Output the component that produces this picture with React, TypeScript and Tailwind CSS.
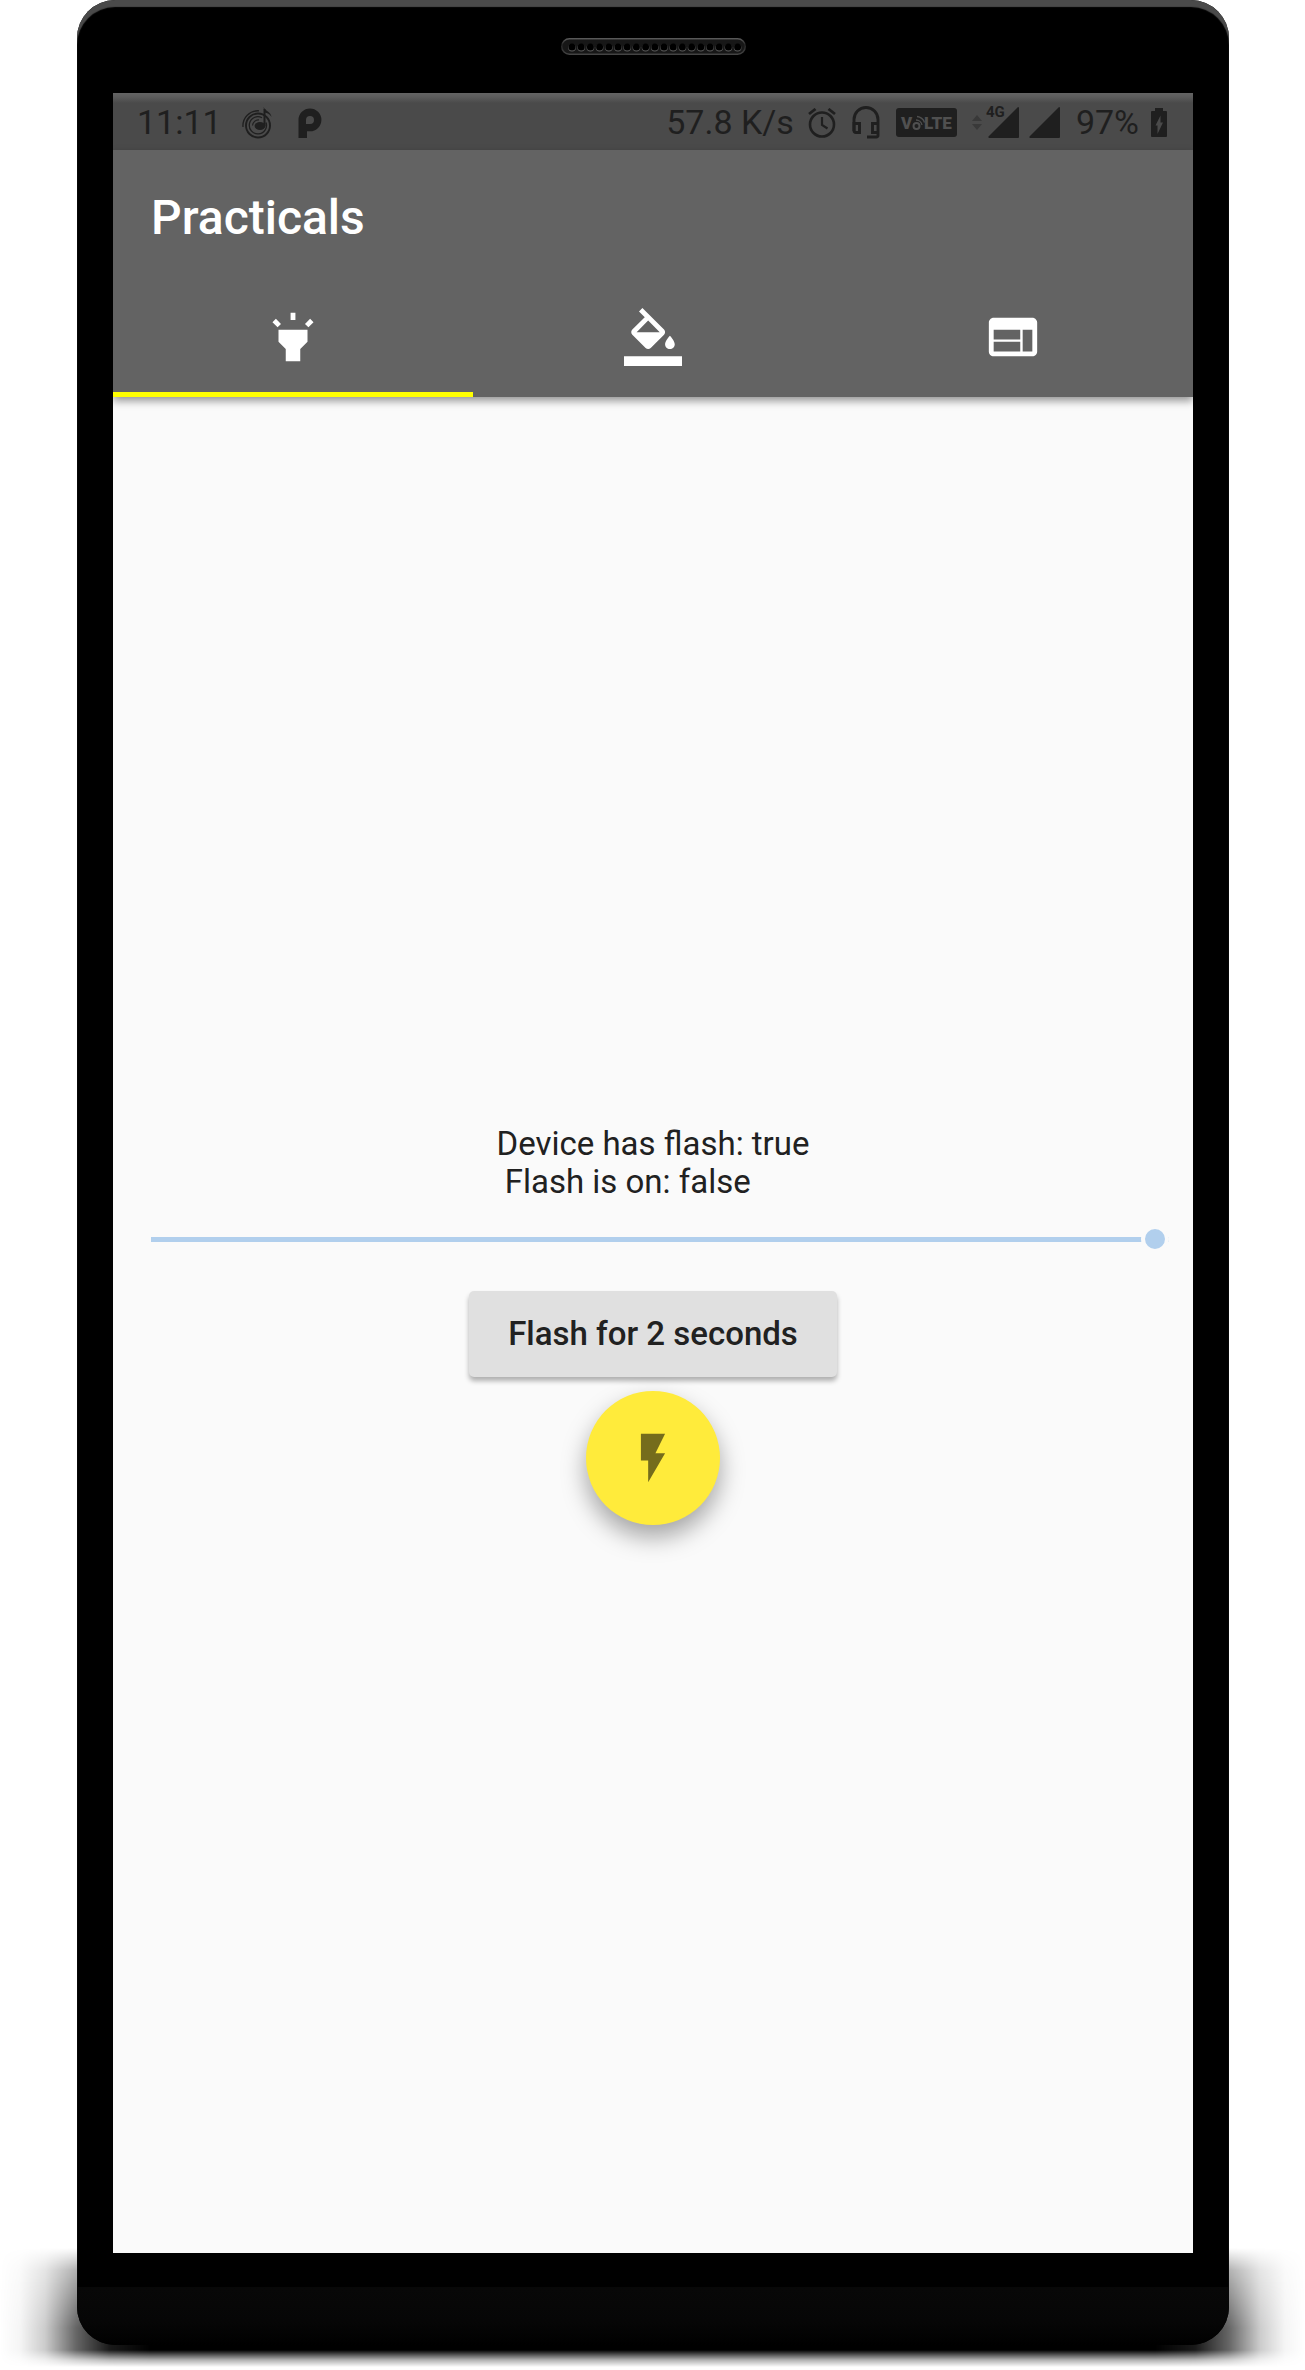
import React, { useState } from "react";

const HOLES = Array.from({ length: 19 }, (_, i) => 11 + i * 9.2);

function Speaker() {
  return (
    <svg width="185" height="17" viewBox="0 0 185 17" aria-hidden="true">
      <defs>
        <linearGradient id="rim" x1="0" y1="0" x2="0" y2="1">
          <stop offset="0" stopColor="#585858" />
          <stop offset="0.4" stopColor="#242424" />
          <stop offset="1" stopColor="#444" />
        </linearGradient>
      </defs>
      <rect x="0.75" y="0.75" width="183.5" height="15.5" rx="7.75" fill="#171717" stroke="url(#rim)" strokeWidth="1.5" />
      {HOLES.map((x) => (
        <g key={x}>
          <circle cx={x} cy="9.8" r="3.8" fill="#5c5c5c" />
          <circle cx={x} cy="9" r="3.5" fill="#000" />
        </g>
      ))}
    </svg>
  );
}

function MusicIcon() {
  return (
    <svg width="30" height="32" viewBox="0 0 30 32" fill="none" stroke="currentColor" aria-hidden="true">
      <circle cx="16" cy="18.500" r="12" strokeWidth="1.900" />
      <path d="M20 10.800A8.600 8.600 0 1 0 24 15.500" strokeWidth="1.300" />
      <path d="M17 13A6 6 0 0 0 10.500 18.500" strokeWidth="1.200" />
      <path d="M1 20A15 15 0 0 1 17 3.800" strokeWidth="1.300" />
      <path d="M22.500 19V2" strokeWidth="2" />
      <path d="M21.500 0c1.500 4 7.500 4.500 8 10-2-3-4-4-7-4.500z" fill="currentColor" stroke="none" />
      <ellipse cx="18" cy="19" rx="5.400" ry="4" fill="currentColor" stroke="none" />
    </svg>
  );
}

function ParkingLogo() {
  return (
    <svg width="24" height="30" viewBox="0 0 24 30" aria-hidden="true">
      <path
        d="M12 0.500a11.400 11.400 0 0 1 0 22.800H9V30H0.500V12A11.500 11.500 0 0 1 12 0.500z M12 8a4 4 0 0 0-4 4v4h4a4 4 0 0 0 0-8z"
        fill="currentColor"
        fillRule="evenodd"
      />
    </svg>
  );
}

function AlarmIcon() {
  return (
    <svg width="28" height="30" viewBox="0 0 28 30" fill="none" stroke="currentColor" aria-hidden="true">
      <circle cx="14" cy="16.500" r="12" strokeWidth="2.600" />
      <path d="M14 9v8l5.500 3.500" strokeWidth="2.200" />
      <path d="M1 6l6.500-5M27 6l-6.500-5" strokeWidth="2.800" />
    </svg>
  );
}

function HeadsetIcon() {
  return (
    <svg width="28" height="33" viewBox="0 0 28 33" fill="none" stroke="currentColor" strokeWidth="2.900" aria-hidden="true">
      <path d="M2 25V13.500a12 12 0 0 1 24 0V29.500a1.500 1.500 0 0 1-1.500 1.500H15" />
      <path d="M2 17.500h5.500v9H4a2 2 0 0 1-2-2zM26 17.500h-5.500v9H26" />
    </svg>
  );
}

function VolteBadge() {
  return (
    <svg width="62" height="29" viewBox="0 0 62 29" role="img" aria-label="VoLTE">
      <rect width="61" height="29" rx="3" fill="currentColor" />
      <g fill="#505050" fontFamily="Roboto, sans-serif" fontWeight="900" fontSize="17">
        <text x="5" y="21">V</text>
        <text x="28" y="21">LTE</text>
      </g>
      <g fill="none" stroke="#505050">
        <circle cx="20.500" cy="18" r="3" strokeWidth="2" />
        <path d="M20 12a6 6 0 0 1 6 5M21 8.500a9 9 0 0 1 7.500 6" strokeWidth="1.300" />
      </g>
    </svg>
  );
}

function DataArrows() {
  return (
    <svg width="10" height="15" viewBox="0 0 10 15" fill="#393939" aria-hidden="true">
      <path d="M5 0l5 6H0zM0 9h10l-5 6z" />
    </svg>
  );
}

function Signal() {
  return (
    <svg width="31" height="31" viewBox="0 0 31 31" fill="currentColor" aria-hidden="true">
      <path d="M30 0q1 0 1 1v29q0 1-1 1H1q-1-0.500-0.500-1.500z" />
    </svg>
  );
}

function BatteryIcon() {
  return (
    <svg width="16" height="29" viewBox="0 0 16 29" aria-hidden="true">
      <path d="M4 0h8v3h3q1 0 1 1v24q0 1-1 1H1q-1 0-1-1V4q0-1 1-1h3z" fill="currentColor" />
      <path d="M9.500 7.500v7H12L6.500 26v-8.500H4.500z" fill="#4a4a4a" />
    </svg>
  );
}

const TAB_ICONS = [
  {
    name: "Flashlight",
    d: "M6 14l3 3v5h6v-5l3-3V9H6zm5-12h2v3h-2zM3.500 5.875L4.914 4.460l2.120 2.122L5.620 7.997zm13.460.71l2.123-2.120 1.414 1.414L18.375 8z",
  },
  {
    name: "Color fill",
    d: "M16.560 8.940L7.620 0 6.210 1.410l2.380 2.380-5.150 5.150c-.590.590-.590 1.540 0 2.120l5.500 5.500c.290.290.680.440 1.060.440s.770-.150 1.060-.440l5.500-5.500c.590-.580.590-1.530 0-2.120zM5.210 10L10 5.210 14.790 10zM19 11.500s-2 2.170-2 3.500c0 1.100.900 2 2 2s2-.900 2-2c0-1.330-2-3.500-2-3.500zM0 20h24v4H0z",
  },
  {
    name: "Web",
    d: "M20 4H4c-1.100 0-1.990.900-1.990 2L2 18c0 1.100.900 2 2 2h16c1.100 0 2-.900 2-2V6c0-1.100-.900-2-2-2zm-5 14H4v-4h11zm0-5H4V9h11zm5 5h-4V9h4z",
  },
];

function StatusBar() {
  return (
    <div className="flex h-[57px] items-center justify-between bg-[#4a4a4a] bg-[linear-gradient(#646464,#5c5c5c_4px,#4a4a4a_10px)] pt-[2px] pr-[26px] pl-6 text-[34px] leading-[55px] text-[#1f1f1f]">
      <div className="flex items-center">
        <span className="mr-5">11:11</span>
        <MusicIcon />
        <span className="ml-[26px]"><ParkingLogo /></span>
      </div>
      <div className="flex items-center">
        <span>57.8 K/s</span>
        <span className="ml-[14px]"><AlarmIcon /></span>
        <span className="ml-4"><HeadsetIcon /></span>
        <span className="ml-4"><VolteBadge /></span>
        <span className="ml-[14px]"><DataArrows /></span>
        <span className="relative ml-[6px]">
          <span className="absolute -top-[2px] -left-[2px] text-[15px] leading-none font-bold">4G</span>
          <Signal />
        </span>
        <span className="ml-[10px]"><Signal /></span>
        <span className="ml-4">97%</span>
        <span className="ml-3"><BatteryIcon /></span>
      </div>
    </div>
  );
}

export default function App() {
  const [tab, setTab] = useState(0);
  const [on, setOn] = useState(false);

  return (
    <div className="relative isolate flex min-h-screen flex-col overflow-hidden bg-white pr-[76px] pb-[25px] pl-[77px] font-['Roboto',sans-serif] [&_svg]:block">
      <div className="absolute inset-x-0 bottom-0 -z-10 h-[122px] bg-black [mask-composite:intersect] [mask-image:linear-gradient(to_right,transparent,rgba(0,0,0,0.04)_20px,rgba(0,0,0,0.2)_45px,rgba(0,0,0,0.6)_76px,rgba(0,0,0,0.9)_110px,#000_150px,#000_calc(100%-150px),rgba(0,0,0,0.9)_calc(100%-110px),rgba(0,0,0,0.6)_calc(100%-76px),rgba(0,0,0,0.2)_calc(100%-45px),rgba(0,0,0,0.04)_calc(100%-20px),transparent),linear-gradient(transparent,rgba(0,0,0,0.5)_22px,#000_80px,#000_102px,rgba(0,0,0,0.3)_112px,transparent_119px)]" />
      <div className="flex flex-1 flex-col rounded-[38px] bg-black px-[36px] shadow-[inset_0_7px_1px_#4a4a4a]">
        <div className="flex h-[93px] items-center justify-center">
          <Speaker />
        </div>
        <div className="flex flex-1 flex-col bg-[#fafafa]">
          <StatusBar />
          <header className="bg-[#636363] text-white shadow-[0_4px_8px_rgba(0,0,0,0.4)]">
            <h1 className="flex h-[135px] items-center px-[38px] text-[48px] font-medium">Practicals</h1>
            <nav role="tablist" className="grid grid-cols-3">
              {TAB_ICONS.map((icon, i) => (
                <button
                  key={icon.name}
                  role="tab"
                  aria-label={icon.name}
                  aria-selected={tab === i}
                  onClick={() => setTab(i)}
                  className={
                    tab === i
                      ? "flex h-[112px] items-center justify-center border-b-[5px] border-[#ffff00] pb-[3px]"
                      : "flex h-[112px] items-center justify-center border-b-[5px] border-transparent pb-[3px]"
                  }
                >
                  <svg width="58" height="58" viewBox="0 0 24 24" fill="currentColor" aria-hidden="true">
                    <path d={icon.d} />
                  </svg>
                </button>
              ))}
            </nav>
          </header>
          <main className="flex flex-1 flex-col items-center justify-center text-[33px] text-[#212121]">
            <p className="leading-[38px] whitespace-pre">{`Device has flash: true\n Flash is ${on ? "on: true" : "on: false"}`}</p>
            <div className="flex h-[76px] w-full items-center pr-6 pl-[38px]">
              <input
                type="range"
                aria-label="Flash intensity"
                min={0}
                max={100}
                defaultValue={100}
                disabled
                className="h-7 w-full appearance-none bg-transparent [&::-webkit-slider-runnable-track]:h-[5px] [&::-webkit-slider-runnable-track]:bg-[#b1cfed] [&::-webkit-slider-thumb]:-mt-[12px] [&::-webkit-slider-thumb]:size-7 [&::-webkit-slider-thumb]:appearance-none [&::-webkit-slider-thumb]:rounded-full [&::-webkit-slider-thumb]:border-4 [&::-webkit-slider-thumb]:border-[#fafafa] [&::-webkit-slider-thumb]:bg-[#b1cfed]"
              />
            </div>
            <button className="my-[14px] h-[86px] rounded-[5px] bg-[#e0e0e0] px-[39px] font-medium shadow-[0_4px_5px_rgba(0,0,0,0.3)]">
              Flash for 2 seconds
            </button>
            <button
              aria-label="Toggle flash"
              onClick={() => setOn(!on)}
              className="flex size-[134px] items-center justify-center rounded-full bg-[#ffeb3b] text-[#756c1c] shadow-[0_12px_24px_rgba(0,0,0,0.35)]"
            >
              <svg width="58" height="58" viewBox="0 0 24 24" fill="currentColor" aria-hidden="true">
                <path d="M7 2v11h3v9l7-12h-4l4-8z" />
              </svg>
            </button>
          </main>
        </div>
        <div className="-mx-[36px] mt-[34px] h-[58px] rounded-b-[38px] bg-[linear-gradient(#080808,#060606_60%,#000)]" />
      </div>
    </div>
  );
}
